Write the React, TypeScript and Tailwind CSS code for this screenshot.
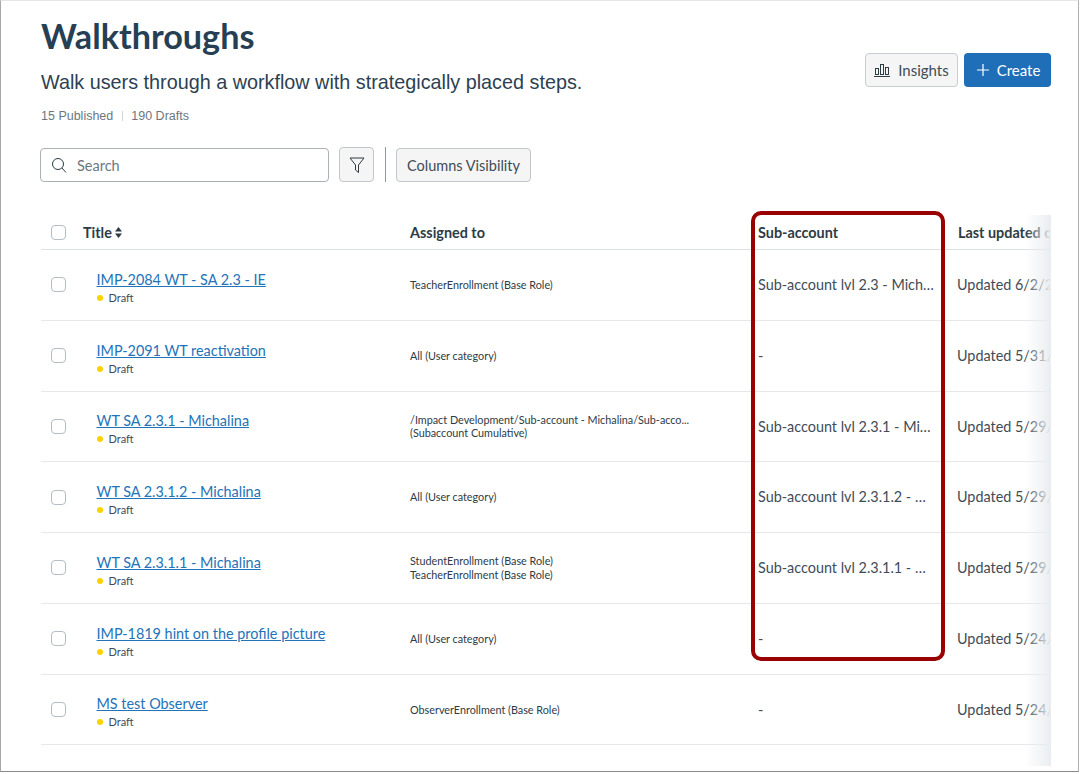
import React from "react";

const rows = [
  { title: "IMP-2084 WT - SA 2.3 - IE", assigned: ["TeacherEnrollment (Base Role)"], sub: "Sub-account lvl 2.3 - Michalina", updated: "Updated 6/2/2023" },
  { title: "IMP-2091 WT reactivation", assigned: ["All (User category)"], sub: "-", updated: "Updated 5/31/2023" },
  { title: "WT SA 2.3.1 - Michalina", assigned: ["/Impact Development/Sub-account - Michalina/Sub-acco...", "(Subaccount Cumulative)"], sub: "Sub-account lvl 2.3.1 - Michalina", updated: "Updated 5/29/2023" },
  { title: "WT SA 2.3.1.2 - Michalina", assigned: ["All (User category)"], sub: "Sub-account lvl 2.3.1.2 - Michalina", updated: "Updated 5/29/2023" },
  { title: "WT SA 2.3.1.1 - Michalina", assigned: ["StudentEnrollment (Base Role)", "TeacherEnrollment (Base Role)"], sub: "Sub-account lvl 2.3.1.1 - Michalina", updated: "Updated 5/29/2023" },
  { title: "IMP-1819 hint on the profile picture", assigned: ["All (User category)"], sub: "-", updated: "Updated 5/24/2023" },
  { title: "MS test Observer", assigned: ["ObserverEnrollment (Base Role)"], sub: "-", updated: "Updated 5/24/2023" },
];

function Check() {
  return <span className="block w-[15px] h-[15px] rounded-[4px] border border-[#b4bcc4] bg-white shrink-0" />;
}

export default function App() {
  return (
    <div className="w-[1080px] h-[774px] bg-white overflow-hidden font-['Lato',sans-serif] text-[#2d3b45]">
      <div className="w-[1079px] h-[772px] border-l border-r border-b border-t border-l-[#a8a8a8] border-r-[#b0b0b0] border-b-[#8a8a8a] border-t-[#e6e6e6] pl-10 pr-[27px] relative overflow-hidden">
        <div className="flex justify-between">
          <div>
            <h1 className="text-[34.2px] leading-[40px] font-bold text-[#273f55] mt-[15px]">Walkthroughs</h1>
            <p className="font-['Liberation_Sans',sans-serif] text-[19.8px] leading-[24px] text-[#2d3f52] mt-[14px]">
              Walk users through a workflow with strategically placed steps.
            </p>
            <div className="flex items-center font-['Liberation_Sans',sans-serif] text-[12.5px] leading-[16px] text-[#6b7780] mt-[14px]">
              <span>15 Published</span>
              <span className="w-px h-[10px] bg-[#d0d5d9] mx-[8.5px]" />
              <span>190 Drafts</span>
            </div>
          </div>
          <div className="flex gap-[6px] mt-[52px] h-[34px]">
            <button className="w-[93px] flex items-center justify-center gap-2 rounded-[4px] border border-[#c7cdd1] bg-[#f5f5f5] text-[15px] text-[#3f4c56]">
              <svg width="16" height="14" viewBox="0 0 16 14" fill="none" stroke="#2d3b45" strokeWidth="1">
                <rect x="1.5" y="5.5" width="3" height="6" />
                <rect x="6.5" y="1.5" width="3" height="10" />
                <rect x="11.5" y="4.5" width="3" height="7" />
                <path d="M0 13.5h16" />
              </svg>
              Insights
            </button>
            <button className="w-[87px] flex items-center justify-center gap-[8px] pl-[2px] rounded-[4px] bg-[#1f6eb8] text-white text-[15px]">
              <svg width="12" height="12" viewBox="0 0 12 12" stroke="white" strokeWidth="1.2"><path d="M6 0v12M0 6h12" /></svg>
              Create
            </button>
          </div>
        </div>

        <div className="flex items-center mt-[23px] h-[35px] -ml-px">
          <div className="w-[289px] h-[34px] rounded-[4px] border border-[#a9b1b7] flex items-center pl-[10px] gap-[10px]">
            <svg width="16" height="16" viewBox="0 0 16 16" fill="none" stroke="#2d3b45" strokeWidth="1">
              <circle cx="7" cy="7" r="5.5" />
              <path d="M11 11l4 4.5" />
            </svg>
            <span className="text-[14.5px] pt-[2px] text-[#6b7780]">Search</span>
          </div>
          <button className="w-[35px] h-[35px] ml-[10px] rounded-[4px] border border-[#c0c6cb] bg-[#f5f5f5] flex items-center justify-center">
            <svg width="16" height="18" viewBox="0 0 16 18" fill="none" stroke="#2d3b45" strokeWidth="1">
              <path d="M1 2h14L9.5 9v7.5L6.5 14V9z" strokeLinejoin="round" />
            </svg>
          </button>
          <span className="w-px h-[35px] bg-[#8f989f] ml-[11px]" />
          <button className="w-[135px] h-[34px] ml-[10px] pt-[2px] rounded-[4px] border border-[#c0c6cb] bg-[#f5f5f5] text-[14.5px] text-[#3f4c56]">
            Columns Visibility
          </button>
        </div>

        <div className="mt-[33px] w-[1010px] overflow-hidden">
          <div className="flex items-center h-[35px] pt-[1px] border-b border-[#dfe2e4] text-[14.4px] font-bold whitespace-nowrap">
            <div className="w-[42px] pl-[10px]"><Check /></div>
            <div className="w-[327px] flex items-center gap-[3px]">
              Title
              <svg width="7" height="11" viewBox="0 0 7 11" fill="#2d3b45"><path d="M3.5 0L7 4.5H0zM3.5 11L0 6.5h7z" /></svg>
            </div>
            <div className="w-[348px]">Assigned to</div>
            <div className="w-[200px]">Sub-account</div>
            <div className="w-[93px] overflow-hidden">Last updated on</div>
          </div>
          {rows.map((r) => (
            <div key={r.title} className="flex items-center h-[70.75px] border-b border-[#e6e8ea] whitespace-nowrap">
              <div className="w-[42px] pl-[10px]"><Check /></div>
              <div className="w-[327px] pl-[13.5px] pt-[6px]">
                <a className="block text-[14.4px] leading-[18px] text-[#2373b9] underline">{r.title}</a>
                <div className="flex items-center gap-[6px] text-[11px] leading-[14px] mt-[2px] text-[#3f4c56]">
                  <span className="w-[6px] h-[6px] rounded-full bg-[#fcd200]" />
                  Draft
                </div>
              </div>
              <div className="w-[348px] text-[10.8px] leading-[13.5px] text-[#2d3b45]">
                {r.assigned.map((a) => <div key={a}>{a}</div>)}
              </div>
              <div className="w-[199px] text-[14.4px] text-[#3f4c56]">
                <div className="w-[178px] overflow-hidden text-ellipsis">{r.sub}</div>
              </div>
              <div className="w-[94px] overflow-hidden text-[14.4px] text-[#3f4c56]">{r.updated}</div>
            </div>
          ))}
        </div>

        <div className="absolute left-[1024px] top-[214px] w-[26px] h-[551px] bg-gradient-to-r from-[#ffffff00] to-[#eaedf0]" />
        <div className="absolute left-[750px] top-[210px] w-[194px] h-[450px] border-[4px] border-[#990000] rounded-[10px]" />
      </div>
    </div>
  );
}
